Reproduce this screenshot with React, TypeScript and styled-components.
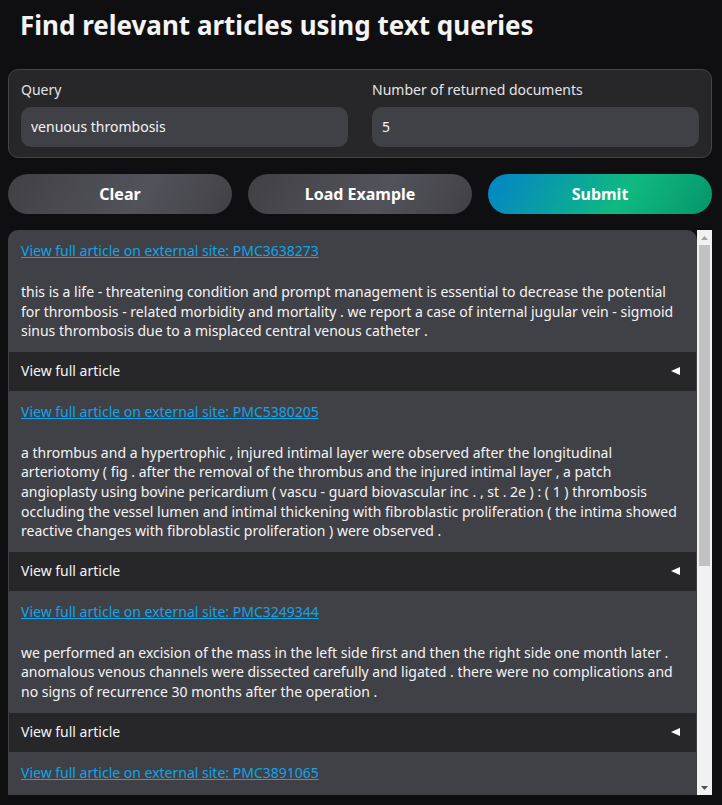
import React from 'react';
import styled, { createGlobalStyle } from 'styled-components';

const GlobalStyle = createGlobalStyle`
  *, *::before, *::after { box-sizing: border-box; }
  body {
    margin: 0;
    background: #0f0f11;
    color: #f4f4f5;
    font-family: 'Noto Sans', 'Open Sans', sans-serif;
    font-size: 14px;
    line-height: 20px;
  }
`;

const Page = styled.main`
  display: flex;
  flex-direction: column;
  gap: 16px;
  height: 100vh;
  padding: 8px 10px 10px 8px;
`;

const Title = styled.h1`
  margin: 0 12px 11px;
  font-size: 26px;
  font-weight: 700;
  line-height: 34px;
`;

const QueryForm = styled.form`
  display: flex;
  flex-direction: column;
  gap: 16px;
`;

const FieldPanel = styled.div`
  display: grid;
  grid-template-columns: 1fr 1fr;
  gap: 24px;
  padding: 10px 12px;
  border: 1px solid #444447;
  border-radius: 10px;
  background: #272729;
`;

const Field = styled.label`
  display: flex;
  flex-direction: column;
  gap: 7px;
  min-width: 0;
  color: #e4e4e7;
`;

const TextInput = styled.input`
  width: 100%;
  height: 40px;
  padding: 0 10px 2px;
  border: 0;
  border-radius: 10px;
  background: #404146;
  color: #f4f4f5;
  font: inherit;
`;

const ButtonRow = styled.div`
  display: grid;
  grid-template-columns: repeat(3, 1fr);
  gap: 16px;
`;

const ActionButton = styled.button<{ $primary?: boolean }>`
  height: 40px;
  border: 0;
  border-radius: 20px;
  background: ${({ $primary }) =>
    $primary
      ? 'linear-gradient(120deg, #0284c7 0%, #10b981 60%, #059669 100%)'
      : 'linear-gradient(120deg, #414144 0%, #52525b 60%, #414144 100%)'};
  color: #fff;
  font: inherit;
  font-size: 16px;
  font-weight: 700;
  cursor: pointer;
`;

const Results = styled.section`
  display: flex;
  flex: 1;
  min-height: 0;
`;

const ArticleList = styled.div`
  flex: 1;
  min-width: 0;
  overflow: hidden;
  border: 1px solid #404146;
  border-width: 0 1px;
  border-radius: 10px 10px 0 0;
  background: #404146;
`;

const ArticleBody = styled.div`
  padding: 11px 12px;
`;

const ArticleLink = styled.a`
  color: #0ea5e9;
  text-decoration: underline;
`;

const Excerpt = styled.p`
  margin: 21px 0 0;
  line-height: 1.4;
`;

const Expander = styled.button`
  display: flex;
  align-items: center;
  justify-content: space-between;
  width: 100%;
  height: 39px;
  padding: 0 16px 0 12px;
  border: 0;
  background: #272729;
  color: #f4f4f5;
  font: inherit;
  cursor: pointer;
`;

const Scrollbar = styled.div`
  display: flex;
  flex-direction: column;
  width: 15px;
  background: #f1f1f1;
`;

const ScrollArrow = styled.button`
  display: flex;
  align-items: center;
  justify-content: center;
  width: 15px;
  height: 15px;
  padding: 0;
  border: 0;
  background: transparent;
`;

const Track = styled.div`
  flex: 1;
  min-height: 0;
  padding: 0 2px;
`;

const Thumb = styled.div`
  height: 60%;
  background: #c1c1c1;
`;

const articles = [
  {
    id: 'PMC3638273',
    text: 'this is a life - threatening condition and prompt management is essential to decrease the potential for thrombosis - related morbidity and mortality . we report a case of internal jugular vein - sigmoid sinus thrombosis due to a misplaced central venous catheter .',
  },
  {
    id: 'PMC5380205',
    text: 'a thrombus and a hypertrophic , injured intimal layer were observed after the longitudinal arteriotomy ( fig . after the removal of the thrombus and the injured intimal layer , a patch angioplasty using bovine pericardium ( vascu - guard biovascular inc . , st . 2e ) : ( 1 ) thrombosis occluding the vessel lumen and intimal thickening with fibroblastic proliferation ( the intima showed reactive changes with fibroblastic proliferation ) were observed .',
  },
  {
    id: 'PMC3249344',
    text: 'we performed an excision of the mass in the left side first and then the right side one month later . anomalous venous channels were dissected carefully and ligated . there were no complications and no signs of recurrence 30 months after the operation .',
  },
  { id: 'PMC3891065', text: '' },
];

export default function App() {
  return (
    <>
      <GlobalStyle />
      <Page>
        <Title>Find relevant articles using text queries</Title>
        <QueryForm onSubmit={(e) => e.preventDefault()}>
          <FieldPanel>
            <Field>
              Query
              <TextInput type="text" defaultValue="venuous thrombosis" />
            </Field>
            <Field>
              Number of returned documents
              <TextInput type="text" inputMode="numeric" defaultValue="5" />
            </Field>
          </FieldPanel>
          <ButtonRow>
            <ActionButton type="reset">Clear</ActionButton>
            <ActionButton type="button">Load Example</ActionButton>
            <ActionButton type="submit" $primary>Submit</ActionButton>
          </ButtonRow>
        </QueryForm>
        <Results>
          <ArticleList>
            {articles.map(({ id, text }) => (
              <article key={id}>
                <ArticleBody>
                  <ArticleLink href={`#${id}`}>View full article on external site: {id}</ArticleLink>
                  {text && <Excerpt>{text}</Excerpt>}
                </ArticleBody>
                {text && (
                  <Expander type="button">
                    View full article
                    <svg width="9" height="8" viewBox="0 0 9 8" aria-hidden="true">
                      <path d="M0 4 9 0v8z" fill="#fff" />
                    </svg>
                  </Expander>
                )}
              </article>
            ))}
          </ArticleList>
          <Scrollbar>
            <ScrollArrow type="button" tabIndex={-1} aria-label="Scroll up">
              <svg width="7" height="4" viewBox="0 0 7 4" aria-hidden="true">
                <path d="M0 4 3.5 0 7 4z" fill="#a3a3a3" />
              </svg>
            </ScrollArrow>
            <Track>
              <Thumb />
            </Track>
            <ScrollArrow type="button" tabIndex={-1} aria-label="Scroll down">
              <svg width="7" height="4" viewBox="0 0 7 4" aria-hidden="true">
                <path d="M0 0h7L3.5 4z" fill="#505050" />
              </svg>
            </ScrollArrow>
          </Scrollbar>
        </Results>
      </Page>
    </>
  );
}
